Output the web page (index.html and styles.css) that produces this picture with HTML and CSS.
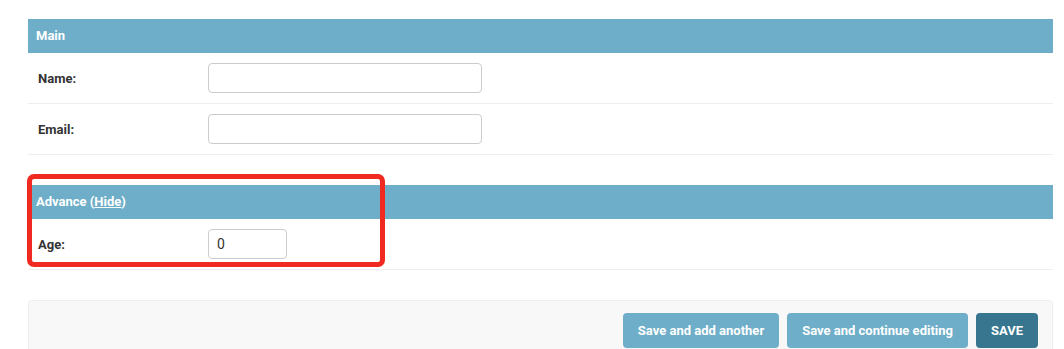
FILE: index.html
```html
<!DOCTYPE html>
<html>
<head>
    <title>Add person</title>
    <link rel="stylesheet" href="styles.css">
</head>
<body>
    <form class="content">
        <fieldset class="module">
            <h2>Main</h2>
            <div class="form-row">
                <label for="id_name">Name:</label>
                <input type="text" id="id_name" class="vTextField">
            </div>
            <div class="form-row">
                <label for="id_email">Email:</label>
                <input type="text" id="id_email" class="vTextField">
            </div>
        </fieldset>

        <fieldset class="module collapse">
            <h2>Advance (<a href="#">Hide</a>)</h2>
            <div class="form-row">
                <label for="id_age">Age:</label>
                <input type="text" id="id_age" class="vIntegerField" value="0">
            </div>
            <div class="highlight"></div>
        </fieldset>

        <div class="submit-row">
            <button type="button" class="button">Save and add another</button>
            <button type="button" class="button">Save and continue editing</button>
            <button type="button" class="button default">SAVE</button>
        </div>
    </form>
</body>
</html>
```

FILE: styles.css
```css
body { margin: 0; background: #fff; font-family: Roboto, "Liberation Sans", sans-serif; font-size: 13px; color: #333; }
.content { margin: 19px 0 0 28px; width: 1025px; }

.module { border: 0; margin: 0; padding: 0; min-width: 0; }
.module + .module { margin-top: 30px; position: relative; }
.module h2 { margin: 0; height: 34px; line-height: 34px; padding: 0 8px; background: #6eaec8; color: #fff; font-size: 13px; font-weight: 700; }
.module h2 a { color: #fff; text-decoration: underline; }

.form-row { display: flex; align-items: center; padding: 10px; border-bottom: 1px solid #eee; }
.form-row label { width: 170px; flex: none; font-weight: 700; color: #333; }
.form-row input { box-sizing: border-box; height: 30px; border: 1px solid #ccc; border-radius: 4px; padding: 0 8px; font-family: Roboto, "Liberation Sans", sans-serif; font-size: 14px; color: #333; background: #fff; }
.vTextField { width: 274px; }
.vIntegerField { width: 79px; }

.highlight { position: absolute; left: -1px; top: -11px; width: 348px; height: 83px; border: 5px solid #f02a20; border-radius: 7px; pointer-events: none; }

.submit-row { margin-top: 30px; padding: 12px 14px; background: #f8f8f8; border: 1px solid #eee; border-radius: 4px; display: flex; justify-content: flex-end; gap: 8px; }
.button { height: 35px; padding: 0 15px; border: 0; border-radius: 4px; background: #6eaec8; color: #fff; font-family: Roboto, "Liberation Sans", sans-serif; font-size: 13px; font-weight: 700; }
.button.default { background: #38768f; }
```
